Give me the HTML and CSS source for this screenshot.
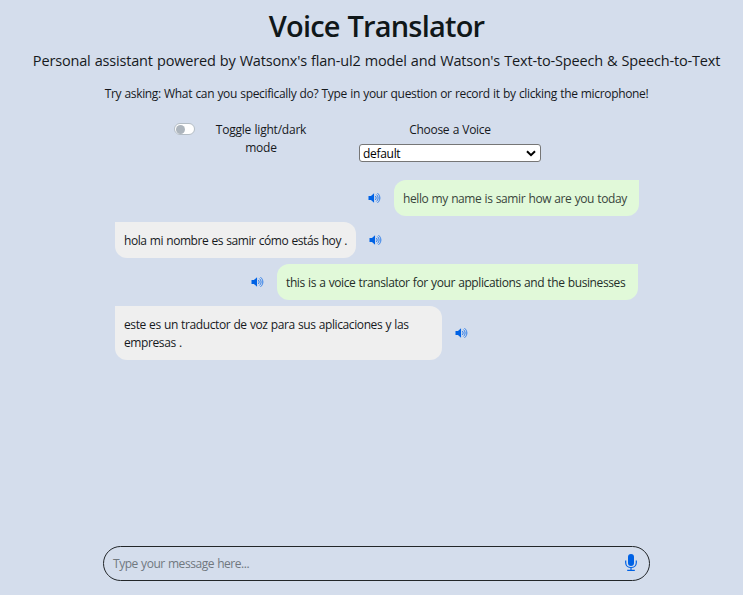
FILE: index.html
```html
<!DOCTYPE html>
<html lang="en">
<head>
<meta charset="utf-8">
<title>Voice Translator</title>
<link rel="stylesheet" href="styles.css">
</head>
<body>
<svg width="0" height="0" class="defs" aria-hidden="true">
  <symbol id="speaker" viewBox="0 0 16 16">
    <path d="M0 5.2h3.3L7.4 1.6v12.8L3.3 10.8H0z"/>
    <path class="wave" d="M9 5.3c1.6 1.5 1.6 3.9 0 5.4M10.5 3.4c3 2.5 3 6.7 0 9.2M12 1.6c4.2 3.6 4.2 9.2 0 12.8"/>
  </symbol>
</svg>
<main class="app">
  <header class="header">
    <h1 class="title">Voice Translator</h1>
    <p class="subtitle">Personal assistant powered by Watsonx's flan-ul2 model and Watson's Text-to-Speech &amp; Speech-to-Text</p>
    <p class="hint">Try asking: What can you specifically do? Type in your question or record it by clicking the microphone!</p>
  </header>
  <section class="options">
    <div class="toggle"><span class="switch"></span><label class="toggle-label">Toggle light/dark mode</label></div>
    <div class="voice">
      <label class="voice-label">Choose a Voice</label>
      <div class="select"><span>default</span><svg viewBox="0 0 10 7"><path d="M1 1.2l4 4 4-4"/></svg></div>
    </div>
  </section>
  <section class="messages">
    <div class="row mine first"><svg class="speaker"><use href="#speaker"/></svg><div class="bubble hello">hello my name is samir how are you today</div></div>
    <div class="row"><div class="bubble hola">hola mi nombre es samir cómo estás hoy .</div><svg class="speaker"><use href="#speaker"/></svg></div>
    <div class="row mine"><svg class="speaker"><use href="#speaker"/></svg><div class="bubble this">this is a voice translator for your applications and the businesses</div></div>
    <div class="row"><div class="bubble este">este es un traductor de voz para sus aplicaciones y las<br>empresas .</div><svg class="speaker"><use href="#speaker"/></svg></div>
  </section>
  <footer class="composer">
    <span class="placeholder">Type your message here...</span>
    <svg class="mic" viewBox="0 0 12 17"><rect x="3" y="0" width="6" height="12" rx="3"/><path d="M.7 6.5v2.2c0 6.4 10.6 6.4 10.6 0V6.5M6 13.5v2.8M2.2 16.3h7.6"/></svg>
  </footer>
</main>
</body>
</html>
```
FILE: styles.css
```css
* { box-sizing: border-box; }
body {
  margin: 0;
  background: #d4ddec;
  color: #16191d;
  font: 12px/18px "Open Sans", "Noto Sans", sans-serif;
  letter-spacing: -0.4px;
  word-spacing: 0.5px;
}
.defs { display: block; height: 0; }
.app { width: 743px; height: 595px; display: flex; flex-direction: column; overflow: hidden; white-space: nowrap; }
.header { display: flex; flex-direction: column; align-items: center; padding: 8px 0 0 10px; }
h1, p { margin: 0; }
.title { font-size: 29px; line-height: 36px; font-weight: 600; letter-spacing: -0.8px; word-spacing: 1px; color: #101719; }
.subtitle { font-size: 14.5px; line-height: 22px; margin-top: 6px; letter-spacing: -0.17px; }
.hint { margin-top: 13px; letter-spacing: -0.34px; }
.options { display: flex; height: 59px; margin-top: 18px; padding-left: 174px; }
.toggle { display: flex; width: 185px; }
.switch { width: 21px; height: 12px; margin-top: 2px; border: 1px solid #b4bdc5; border-radius: 6px; background: #fff; }
.switch::before { content: ""; display: block; width: 9px; height: 9px; margin: .5px 1px; border-radius: 50%; background: #adb5bd; }
.toggle-label { width: 94px; margin-left: 19px; text-align: center; white-space: normal; letter-spacing: -0.22px; }
.voice { width: 182px; text-align: center; }
.voice-label { letter-spacing: -0.3px; }
.select { display: flex; align-items: center; justify-content: space-between; height: 18px; margin-top: 5px; padding: 1px 4px 0 3px; border: 1px solid #767676; border-radius: 3px; background: #fff; color: #000; letter-spacing: -0.3px; }
.select svg { width: 10px; height: 7px; fill: none; stroke: #000; stroke-width: 2; margin-bottom: 1px; }
.messages { display: flex; flex-direction: column; gap: 6px; padding: 0 105px 0 115px; }
.row { display: flex; align-items: center; gap: 13px; }
.mine { justify-content: flex-end; }
.first { margin-right: -1px; }
.bubble { padding: 10px 9px 8px; border-radius: 0 12px 12px 12px; background: #efefef; }
.mine .bubble { border-radius: 12px 0 12px 12px; background: #e1f9d9; }
.hello { width: 245px; color: #39453c; }
.hola { width: 241px; letter-spacing: -0.43px; }
.this { width: 361px; color: #242e29; }
.este { width: 327px; }
.speaker { width: 13px; height: 12px; fill: #0062e5; flex: none; margin-bottom: 1px; }
.wave { fill: none; stroke: #1971e8; stroke-width: 1.2; }
.composer { display: flex; align-items: center; justify-content: space-between; width: 547px; height: 35px; margin: auto 0 14px 103px; padding: 0 12px 0 9px; border: 1px solid #222629; border-radius: 18px; }
.placeholder { color: #70787f; letter-spacing: -0.45px; }
.mic { width: 12px; height: 17px; fill: #0062e5; margin-bottom: 3px; }
.mic path { fill: none; stroke: #0062e5; stroke-width: 1.2; }
```
